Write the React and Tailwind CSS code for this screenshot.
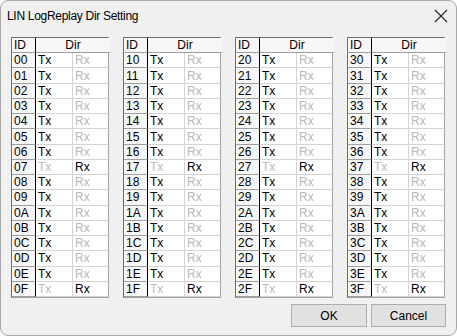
import React from "react";

const tables = [0, 1, 2, 3].map((t) =>
  Array.from({ length: 16 }, (_, r) => ({
    id: (t * 16 + r).toString(16).toUpperCase().padStart(2, "0"),
    rx: r === 7 || r === 15,
  }))
);

function DirTable({ rows }) {
  return (
    <div className="grid h-[261px] w-[98px] grid-cols-[24px_37px_37px] grid-rows-[repeat(17,minmax(0,1fr))] border border-t-[#6d6d6d] border-l-[#6d6d6d] border-r-[#a0a0a0] border-b-[#a0a0a0] bg-white text-[12px] leading-none text-black">
      <div className="flex items-center border-r border-b border-r-black border-b-[#a0a0a0] bg-[#f7f7f7] pl-[2px]">
        ID
      </div>
      <div className="col-span-2 flex items-center justify-center border-b border-b-[#a0a0a0] bg-[#f7f7f7]">
        Dir
      </div>
      {rows.map((row) => (
        <React.Fragment key={row.id}>
          <div className="flex items-center border-r border-b border-r-black border-b-[#a0a0a0] bg-[#f7f7f7] pl-[2px]">
            {row.id}
          </div>
          <div
            className={
              "flex items-center border-r border-b border-[#d4d4d4] pl-[2px] " +
              (row.rx ? "text-[#b8b8b8]" : "text-black")
            }
          >
            Tx
          </div>
          <div
            className={
              "flex items-center border-b border-[#d4d4d4] pl-[2px] " +
              (row.rx ? "text-black" : "text-[#b8b8b8]")
            }
          >
            Rx
          </div>
        </React.Fragment>
      ))}
    </div>
  );
}

export default function App() {
  return (
    <div className="h-[336px] w-[457px] bg-white">
      <div className="flex h-[336px] w-[457px] flex-col rounded-[8px] border border-[#a9a9a9] bg-[#f0f0f0] font-['Liberation_Sans',Arial,sans-serif]">
        <div className="flex h-[30px] items-center justify-between pl-[6px] pr-[7px] text-[12px] text-black">
          <span className="tracking-[-0.3px]">LIN LogReplay Dir Setting</span>
          <svg width="14" height="14" viewBox="0 0 14 14" className="mr-[1px]">
            <path d="M1 1 L13 13 M13 1 L1 13" stroke="#222" strokeWidth="1.1" />
          </svg>
        </div>
        <div className="flex gap-[14px] pl-[10px] pt-[6px]">
          {tables.map((rows, i) => (
            <DirTable key={i} rows={rows} />
          ))}
        </div>
        <div className="flex justify-end gap-[4px] pr-[10px] pt-[6px]">
          <button className="h-[23px] w-[76px] border border-[#adadad] bg-[#e1e1e1] text-[12px] text-black">
            OK
          </button>
          <button className="h-[23px] w-[75px] border border-[#adadad] bg-[#e1e1e1] text-[12px] text-black">
            Cancel
          </button>
        </div>
      </div>
    </div>
  );
}
